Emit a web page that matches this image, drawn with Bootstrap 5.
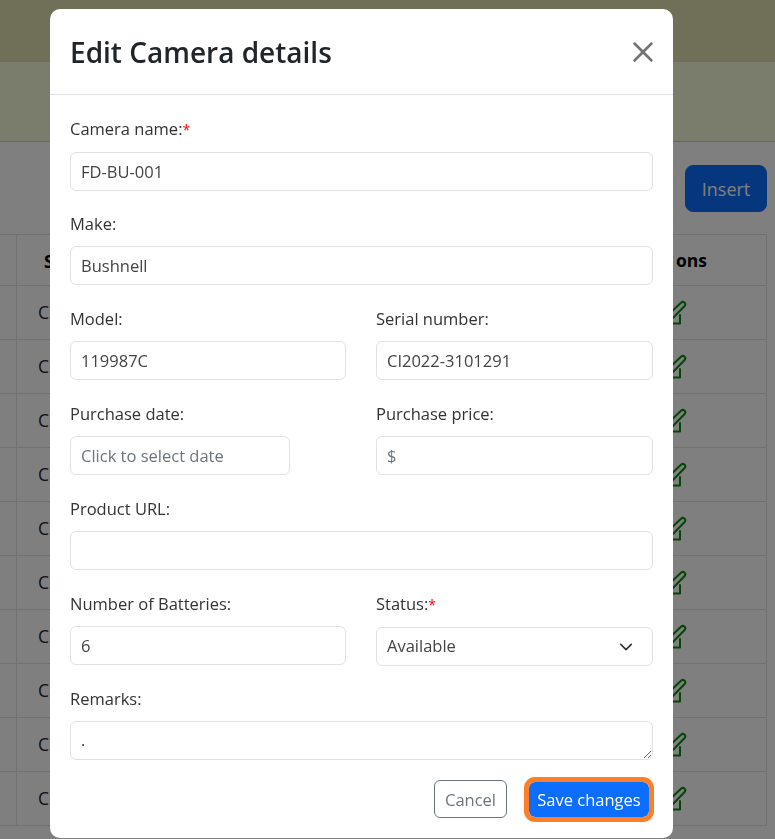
<!DOCTYPE html>
<html lang="en">
<head>
  <meta charset="UTF-8" />
  <meta name="viewport" content="width=device-width, initial-scale=1.0"/>
  <title>Edit Camera details</title>
  <link href="https://cdn.jsdelivr.net/npm/bootstrap@5.3.0/dist/css/bootstrap.min.css" rel="stylesheet"/>
  <style>
    html, body { height: 100%; overflow: hidden; }
    body { font-family: "Open Sans", "Noto Sans", sans-serif; font-size: 16.5px; }
    .top-band { height: 62px; background: #dfe0ae; }
    .sub-band { height: 80px; background: #f5f8d9; border-bottom: 1px solid #ccc; }
    .tool-row { height: 92px; padding: 23px 8px 0 0; }
    .insert-btn { width: 82px; height: 47px; padding-top: 8px; font-size: 18px; border-radius: 8px; }
    .cam-table { width: 768px; margin-left: -1px; table-layout: fixed; }
    .cam-table th, .cam-table td { height: 54px; padding: 0 21px; vertical-align: middle; font-size: 17.5px; }
    .cam-table thead th { height: 51px; padding-top: 3px; color: #000; font-weight: 700; }
    .cam-table th.stat-col { padding-left: 27px; }
    .cam-table .gap-col { width: 17px; padding: 0; }
    .cam-table .act-col { width: 110px; padding: 0 0 0 3px; }
    .cam-table th.act-col { padding-left: 0; text-align: right; padding-right: 59px; }
    .edit-icon { width: 27px; height: 25px; display: block; }
    .cam-modal { width: 623px; max-width: none; margin: 9px 0 0 50px; }
    .cam-modal .modal-content { height: 829px; border-radius: 10px; border: 0; }
    .cam-modal .modal-header { height: 86px; padding: 0 19px 0 20px; }
    .cam-modal .modal-title { font-size: 28px; font-weight: 600; color: #212529; }
    .cam-modal .btn-close { width: 22px; height: 22px; padding: 0; margin: 0; background-size: 22px; opacity: .55; }
    .cam-modal .modal-body { padding: 22px 20px 0; overflow: hidden; flex: 0 0 auto; height: 665px; }
    .field-block { height: 95px; }
    .cam-modal .form-label { margin-bottom: 10px; line-height: 24px; color: #333; }
    .cam-modal .form-control, .cam-modal .form-select { height: 39px; min-height: 39px; font-size: 16.5px; line-height: 24px; color: #444; border-color: #dee2e6; padding: 6px 10px; }
    .cam-modal .form-select { padding: 5px 10px 7px; background-position: right 17px center; background-size: 18px 14px; }
    .cam-modal .form-control::placeholder { color: #6c757d; }
    .date-input { width: 220px; }
    .req-star { color: #f00; font-size: 14px; }
    .field-row { --bs-gutter-x: 30px; }
    .field-row > .left-col { flex: 0 0 306px; width: 306px; }
    .field-row > .right-col { flex: 0 0 307px; width: 307px; }
    .cam-modal .modal-footer { padding: 0 24px 20px 20px; border: 0; gap: 22px; align-items: center; margin-top: auto; }
    .cam-modal .modal-footer .btn { margin: 0; font-size: 16.5px; padding: 3px 0 0; line-height: 1; }
    .cam-modal .modal-footer .cancel-btn { width: 73px; height: 38px; }
    .cam-modal .modal-footer .save-btn { width: 120px; height: 35px; outline: 5px solid #ff7f27; border: 0; border-radius: 6px; }
  </style>
</head>
<body>
  <div class="top-band"></div>
  <div class="sub-band"></div>
  <div class="tool-row d-flex justify-content-end">
    <button class="btn btn-primary insert-btn">Insert</button>
  </div>
  <table class="table table-bordered cam-table">
    <thead>
      <tr><th class="gap-col"></th><th class="stat-col">S</th><th></th><th class="act-col">ons</th></tr>
    </thead>
    <tbody id="cam-rows"></tbody>
  </table>

  <div class="modal-backdrop show"></div>
  <div class="modal d-block" tabindex="-1">
    <div class="modal-dialog cam-modal">
      <div class="modal-content">
        <div class="modal-header">
          <h5 class="modal-title">Edit Camera details</h5>
          <button type="button" class="btn-close" aria-label="Close"></button>
        </div>
        <div class="modal-body">
          <div class="field-block">
            <label class="form-label" for="camName">Camera name:<span class="req-star">*</span></label>
            <input class="form-control" id="camName" value="FD-BU-001" />
          </div>
          <div class="field-block">
            <label class="form-label" for="camMake">Make:</label>
            <input class="form-control" id="camMake" value="Bushnell" />
          </div>
          <div class="row field-row">
            <div class="left-col field-block">
              <label class="form-label" for="camModel">Model:</label>
              <input class="form-control" id="camModel" value="119987C" />
            </div>
            <div class="right-col field-block">
              <label class="form-label" for="camSerial">Serial number:</label>
              <input class="form-control" id="camSerial" value="CI2022-3101291" />
            </div>
          </div>
          <div class="row field-row">
            <div class="left-col field-block">
              <label class="form-label" for="camDate">Purchase date:</label>
              <input class="form-control date-input" id="camDate" placeholder="Click to select date" />
            </div>
            <div class="right-col field-block">
              <label class="form-label" for="camPrice">Purchase price:</label>
              <input class="form-control" id="camPrice" placeholder="$" />
            </div>
          </div>
          <div class="field-block">
            <label class="form-label" for="camUrl">Product URL:</label>
            <input class="form-control" id="camUrl" />
          </div>
          <div class="row field-row">
            <div class="left-col field-block">
              <label class="form-label" for="camBatt">Number of Batteries:</label>
              <input class="form-control" id="camBatt" value="6" />
            </div>
            <div class="right-col field-block">
              <label class="form-label" for="camStatus">Status:<span class="req-star">*</span></label>
              <select class="form-select" id="camStatus"><option>Available</option></select>
            </div>
          </div>
          <div class="field-block">
            <label class="form-label" for="camRemarks">Remarks:</label>
            <textarea class="form-control" id="camRemarks">.</textarea>
          </div>
        </div>
        <div class="modal-footer">
          <button class="btn btn-outline-secondary cancel-btn">Cancel</button>
          <button class="btn btn-primary save-btn">Save changes</button>
        </div>
      </div>
    </div>
  </div>

  <script src="https://cdn.jsdelivr.net/npm/bootstrap@5.3.0/dist/js/bootstrap.bundle.min.js"></script>
  <script>
    const icon = '<svg class="edit-icon" viewBox="0 0 27 25" fill="none" stroke="#0a8a0a" stroke-width="2" stroke-linecap="round" stroke-linejoin="round"><path d="M6 17 L21 2.8 a2.4 2.4 0 0 1 3.6 3.2 L10 21 L5 22 Z"/><path d="M9 10 H3 V23.5 H20 V15"/></svg>';
    let rows = '';
    for (let i = 0; i < 10; i++) {
      rows += '<tr><td class="gap-col"></td><td class="stat-col">C</td><td></td><td class="act-col">' + icon + '</td></tr>';
    }
    document.getElementById('cam-rows').innerHTML = rows;
  </script>
</body>
</html>
